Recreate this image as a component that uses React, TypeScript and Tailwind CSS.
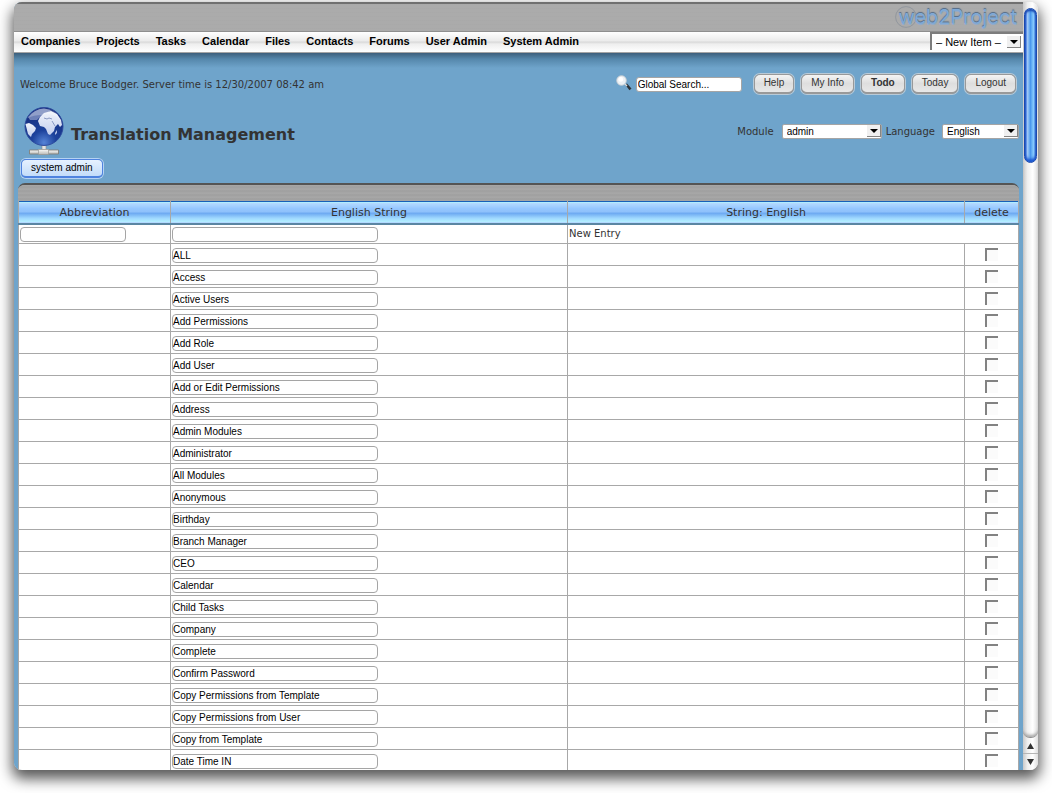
import React from 'react';

const menu = ['Companies', 'Projects', 'Tasks', 'Calendar', 'Files', 'Contacts', 'Forums', 'User Admin', 'System Admin'];
const actions = ['Help', 'My Info', 'Todo', 'Today', 'Logout'];
const strings = [
  'ALL', 'Access', 'Active Users', 'Add Permissions', 'Add Role', 'Add User', 'Add or Edit Permissions',
  'Address', 'Admin Modules', 'Administrator', 'All Modules', 'Anonymous', 'Birthday', 'Branch Manager',
  'CEO', 'Calendar', 'Child Tasks', 'Company', 'Complete', 'Confirm Password',
  'Copy Permissions from Template', 'Copy Permissions from User', 'Copy from Template', 'Date Time IN',
];

const SANS = "font-['Liberation_Sans',sans-serif]";
const field = "block h-[15px] rounded-[4px] border border-[#a5a5a5] bg-white px-0 text-[10px] leading-3 text-black outline-none font-['Liberation_Sans',sans-serif]";
const headCell = 'h-[22px] border-x border-[#a8a8a8] p-0 pt-px font-normal';

function Arrow({ className }: { className: string }) {
  return (
    <svg viewBox="0 0 14 12" preserveAspectRatio="none" className={`pointer-events-none absolute ${className}`} aria-hidden="true">
      <path d="M0 0H14V12H0z" fill="#858585" />
      <path d="M0 0H13V11H0z" fill="#f0f0f0" />
      <path d="M3 4H11L7 8z" fill="#000" />
    </svg>
  );
}

function Globe() {
  return (
    <svg viewBox="0 0 40 49" className="h-[49px] w-10" aria-hidden="true">
      <defs>
        <radialGradient id="sea" cx="50%" cy="92%" r="80%">
          <stop offset="0" stopColor="#5583d6" />
          <stop offset="0.4" stopColor="#1d429c" />
          <stop offset="1" stopColor="#172f80" />
        </radialGradient>
        <linearGradient id="land" x1="0" y1="0" x2="0" y2="1">
          <stop offset="0" stopColor="#f0f3fb" />
          <stop offset="1" stopColor="#c3cfee" />
        </linearGradient>
        <linearGradient id="pipe" x1="0" y1="0" x2="0" y2="1">
          <stop offset="0" stopColor="#fbfbf9" />
          <stop offset="1" stopColor="#b9b9b5" />
        </linearGradient>
      </defs>
      <path d="M18 38h4v5h-4z" fill="#e4e4e2" stroke="#8a8a8a" strokeWidth="0.6" />
      <path d="M5.5 43h29v4h-29z" fill="url(#pipe)" stroke="#80807c" strokeWidth="0.9" />
      <path d="M14.5 42.5h10v5h-10z" fill="url(#pipe)" stroke="#9a9a96" strokeWidth="0.7" />
      <circle cx="20" cy="19.5" r="19" fill="url(#sea)" stroke="#2b479c" strokeWidth="0.9" />
      <path d="M4 10Q10 2 20 1.5L27 3 23 7 17 9 13 13 6 13z" fill="#8394c4" opacity="0.8" />
      <path d="M1.5 17L5 16 9 18 12 21 11 24 8 27 7 30 4 27z" fill="url(#land)" />
      <path d="M14 14L16 10 20 6 27 4 33 7 37 13 38 18 36 20 34 17 31 20 30 24 26 28 24 27 22 22 20 20 16 19z" fill="url(#land)" />
      <path d="M20 11L23 12 25 11 28 12M31 19L28 14" fill="none" stroke="#7385b5" strokeWidth="0.8" />
      <path d="M31 26L33 23 33 26 31 28z" fill="#b4c2e6" />
      <path d="M4 11Q11 1.5 20 1.5Q32 2 37 13Q28 5 18 8Q9 8 4 11z" fill="#fff" opacity="0.25" />
    </svg>
  );
}

function Magnifier() {
  return (
    <svg viewBox="0 0 16 16" className="mb-1 h-4 w-4" aria-hidden="true">
      <path d="M9 9.5L11 8.5 15.5 13.5 13.5 15.2z" fill="#2e3338" />
      <path d="M9 9L11 11" stroke="#ddd" strokeWidth="1.4" />
      <circle cx="5.5" cy="5.5" r="4.8" fill="#edf1f5" stroke="#c6cdd3" strokeWidth="0.9" />
      <circle cx="4.8" cy="4.4" r="2.4" fill="#fff" />
    </svg>
  );
}

function Scrollbar() {
  return (
    <div className="flex w-[15px] shrink-0 flex-col bg-[linear-gradient(90deg,#c9c9c9,#efefef_30%,#ffffff_65%,#dedede)]" aria-hidden="true">
      <div className="mx-px mt-1.5 h-[155px] rounded-[7px] border border-[#1b49ad] bg-[linear-gradient(90deg,#2a62d2,#a4cdf8_22%,#79b4f2_35%,#4a98ee_50%,#8fd2ff_80%,#2f6cd0)] shadow-[inset_0_2px_2px_#1846b0,inset_0_-3px_3px_#1a55d0]" />
      <div className="flex-1 rounded-b-[7px] border-b border-[#8f8f8f] shadow-[inset_0_-3px_3px_-1px_#a8a8a8]" />
      <div className="flex h-4 items-center justify-center border-b border-[#b5b5b5]">
        <svg viewBox="0 0 7 6" className="h-1.5 w-[7px]"><path d="M3.5 0L7 6H0z" fill="#333" /></svg>
      </div>
      <div className="flex h-4 items-center justify-center">
        <svg viewBox="0 0 7 6" className="h-1.5 w-[7px]"><path d="M0 0H7L3.5 6z" fill="#333" /></svg>
      </div>
    </div>
  );
}

function TopBar() {
  return (
    <header>
      <div className="flex h-[29px] justify-end border-t-2 border-[#707070] bg-[#ababab] bg-[repeating-linear-gradient(0deg,#ababab_0,#ababab_2px,#a8a8a8_3px,#aeaeae_4px)] pr-1.5">
        <div className="relative">
          <svg viewBox="0 0 24 22" className="absolute -left-1 top-0.5 h-[22px] w-6" aria-hidden="true">
            <circle cx="12" cy="11" r="10.4" fill="none" stroke="#8b929b" strokeWidth="0.8" />
          </svg>
          <span className="relative text-[20px] leading-[26px] text-[#7fa9d6] [text-shadow:0_-1px_1px_#4f6886,0_1px_0_#93abc8] font-['Inter',sans-serif]">web2Project</span>
        </div>
      </div>
      <nav className="flex h-[22px] items-start border-y border-t-[#8f8f8f] border-b-[#a5a5a5] bg-[linear-gradient(#ffffff,#ebebeb_45%,#d8d8d8_50%,#eeeeee_60%,#ffffff)]">
        <ul className={`flex gap-4 pl-[7px] pt-px text-[11px] font-bold leading-4 text-black ${SANS}`}>
          {menu.map((m) => <li key={m}><a href="#" className="whitespace-nowrap">{m}</a></li>)}
        </ul>
        <div className="relative ml-auto">
          <select aria-label="New item" className={`block h-[18px] w-[93px] appearance-none border-l-2 border-t-2 border-[#7d7d7d] bg-white pl-1 text-[11px] leading-4 text-black ${SANS}`}>
            <option>– New Item –</option>
          </select>
          <Arrow className="right-0.5 top-1 h-3 w-3.5" />
        </div>
      </nav>
    </header>
  );
}

export default function App() {
  return (
    <div className="h-screen overflow-hidden bg-white pb-[23px] pl-3.5 pr-3.5 pt-0.5 text-[10px] text-[#333] font-['DejaVu_Sans',sans-serif]">
      <div className="h-full rounded-[8px] shadow-[0_7px_14px_2px_rgba(0,0,0,0.65)]">
        <div className="flex h-full overflow-hidden rounded-[8px]">
          <div className="min-w-0 flex-1 overflow-hidden bg-[#6fa4cb]">
            <TopBar />
            <main className="bg-[linear-gradient(#3d5f7c,#5587ab_6px,#6fa4cb_15px)] px-1">
              <div className="flex h-[55px] items-center pl-0.5 pr-[3px] pt-1.5">
                <p className="whitespace-nowrap pt-0.5">Welcome Bruce Bodger. Server time is 12/30/2007 08:42 am</p>
                <form className="ml-auto flex items-center gap-1 pt-0.5">
                  <Magnifier />
                  <input aria-label="Global search" defaultValue="Global Search..." className={`h-[15px] w-[106px] rounded-[3px] border border-[#a5a5a5] bg-white px-px text-[10px] leading-3 text-black outline-none ${SANS}`} />
                </form>
                <div className="ml-3 flex gap-[7px]">
                  {actions.map((a) => (
                    <button key={a} type="button" className={`h-5 rounded-[6px] border border-b-2 border-[#999] bg-[linear-gradient(#f4f4f4,#dedede_50%,#e8e8e8)] px-[9px] text-[10px] leading-4 shadow-[0_0_0_1px_#b9cad7] ${SANS} ${a === 'Todo' ? 'font-bold' : ''}`}>{a}</button>
                  ))}
                </div>
              </div>
              <div className="flex h-[46px] items-center pl-1.5">
                <Globe />
                <h1 className="mt-2 whitespace-nowrap pl-[7px] text-[16px] font-bold leading-5">Translation Management</h1>
                <div className="ml-auto flex items-center">
                  <label htmlFor="module" className="pr-2">Module</label>
                  <div className="relative">
                    <select id="module" className={`block h-[15px] w-[100px] appearance-none rounded-[2px] border border-[#a5a5a5] bg-white pl-1 text-[10px] leading-[13px] text-black ${SANS}`}><option>admin</option></select>
                    <Arrow className="right-px top-px h-3 w-3.5" />
                  </div>
                  <label htmlFor="language" className="pl-1 pr-[7px]">Language</label>
                  <div className="relative">
                    <select id="language" className={`block h-[15px] w-[77px] appearance-none rounded-[2px] border border-[#a5a5a5] bg-white pl-1 text-[10px] leading-[13px] text-black ${SANS}`}><option>English</option></select>
                    <Arrow className="right-px top-px h-3 w-3.5" />
                  </div>
                </div>
              </div>
              <div className="flex h-6 items-end pl-[3px]">
                <button type="button" className={`h-[19px] rounded-[5px] border border-b-2 border-[#4f83df] bg-[linear-gradient(#e6f1ff,#c3dcf9)] px-[9px] text-[10px] leading-4 text-black shadow-[0_0_0_1px_#b5d2f3] ${SANS}`}>system admin</button>
              </div>
              <section className="mt-[5px] overflow-hidden rounded-t-[7px] border-t-2 border-[#555] bg-[#a3a3a3]">
                <div className="h-4 bg-[repeating-linear-gradient(#a9a9a9_0,#9f9f9f_2px,#a7a7a7_4px)]" />
                <table className="w-full table-fixed border-collapse bg-white">
                  <colgroup>
                    <col className="w-[152px]" /><col /><col /><col className="w-[54px]" />
                  </colgroup>
                  <thead>
                    <tr className="border-b-2 border-t border-b-[#5b86a3] border-t-[#1860b8] bg-[linear-gradient(#b5daff,#94c6ff_30%,#8fc1fb_45%,#6fabf2_55%,#9fd8ff_80%,#b4f0ff)] text-[11px]">
                      <th className={headCell}>Abbreviation</th>
                      <th className={headCell}>English String</th>
                      <th className={headCell}>String: English</th>
                      <th className={headCell}>delete</th>
                    </tr>
                  </thead>
                  <tbody>
                    <tr className="h-5 border-b border-[#a8a8a8]">
                      <td className="border-x border-[#a8a8a8] p-0 pl-px pt-0.5"><input aria-label="New abbreviation" className={`${field} w-[106px]`} /></td>
                      <td className="border-r border-[#a8a8a8] p-0 pl-px pt-0.5"><input aria-label="New English string" className={`${field} w-[206px]`} /></td>
                      <td colSpan={2} className="border-r border-[#a8a8a8] p-0 pl-px">New Entry</td>
                    </tr>
                    {strings.map((s) => (
                      <tr key={s} className="h-[22px] border-b border-[#a8a8a8]">
                        <td className="border-x border-[#a8a8a8] p-0" />
                        <td className="border-r border-[#a8a8a8] p-0 pl-px pt-px"><input aria-label={`English string ${s}`} defaultValue={s} className={`${field} w-[206px]`} /></td>
                        <td className="border-r border-[#a8a8a8] p-0" />
                        <td className="border-r border-[#a8a8a8] p-0">
                          <input type="checkbox" aria-label={`Delete ${s}`} className="mx-auto block h-[13px] w-[13px] appearance-none border-l-2 border-t-2 border-[#828282] bg-[#fbfbfb]" />
                        </td>
                      </tr>
                    ))}
                  </tbody>
                </table>
              </section>
            </main>
          </div>
          <Scrollbar />
        </div>
      </div>
    </div>
  );
}
